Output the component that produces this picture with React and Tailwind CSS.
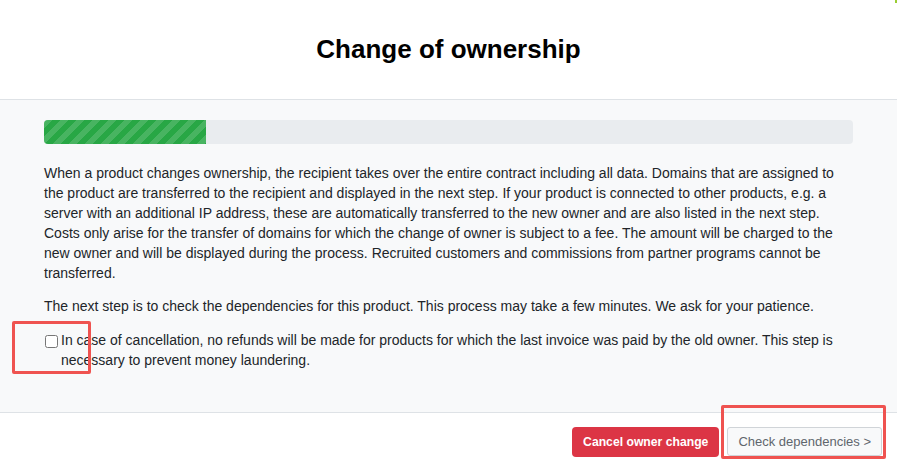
import React from "react";

export default function App() {
  return (
    <div className="relative w-full h-[462px] overflow-hidden bg-white font-['Liberation_Sans',Arial,sans-serif] text-[#212529]">
      <div className="h-[100px] flex items-center justify-center border-b border-[#dee2e6]">
        <h1 className="text-[26px] font-bold text-black leading-none -mt-[1px]">Change of ownership</h1>
      </div>
      <div className="bg-[#f8f9fa] h-[313px] px-[44px] pt-[20px] border-b border-[#dee2e6]">
        <div className="h-[24px] w-full rounded-[4px] bg-[#e9ecef] overflow-hidden">
          <div className="h-full w-[20%] bg-[#28a745] bg-[linear-gradient(135deg,rgba(255,255,255,.15)_25%,transparent_25%,transparent_50%,rgba(255,255,255,.15)_50%,rgba(255,255,255,.15)_75%,transparent_75%,transparent)] bg-[length:16px_16px]" />
        </div>
        <p className="mt-[19px] text-[14px] leading-[20px]">
          When a product changes ownership, the recipient takes over the entire contract including all data. Domains that are assigned to the product are transferred to the recipient and displayed in the next step. If your product is connected to other products, e.g. a server with an additional IP address, these are automatically transferred to the new owner and are also listed in the next step. Costs only arise for the transfer of domains for which the change of owner is subject to a fee. The amount will be charged to the new owner and will be displayed during the process. Recruited customers and commissions from partner programs cannot be transferred.
        </p>
        <p className="mt-[13px] text-[14px] leading-[20px]">
          The next step is to check the dependencies for this product. This process may take a few minutes. We ask for your patience.
        </p>
        <div className="mt-[14px] flex items-start text-[14px] leading-[20px]">
          <input type="checkbox" className="mt-[5px] ml-[1px] mr-[3px] w-[13px] h-[13px] shrink-0" />
          <span>
            In case of cancellation, no refunds will be made for products for which the last invoice was paid by the old owner. This step is necessary to prevent money laundering.
          </span>
        </div>
      </div>
      <div className="h-[49px] flex items-start justify-end pt-[14px] pr-[15px] gap-[8px]">
        <button className="h-[30px] px-[11px] rounded-[4px] bg-[#dc3545] text-white text-[12.2px] font-bold">
          Cancel owner change
        </button>
        <button className="h-[29px] px-[10px] rounded-[3px] bg-[#f8f9fa] border border-[#d0d4d8] text-[#5f666d] text-[13px]">
          Check dependencies &gt;
        </button>
      </div>
      <div className="absolute left-[12px] top-[321px] w-[79px] h-[53px] border-[3px] border-[#ef5350] rounded-[2px]" />
      <div className="absolute left-[721px] top-[405px] w-[165px] h-[54px] border-[3px] border-[#ef5350] rounded-[2px]" />
      <div className="absolute right-0 top-0 w-[2px] h-[3px] bg-[#9acd32]" />
    </div>
  );
}
